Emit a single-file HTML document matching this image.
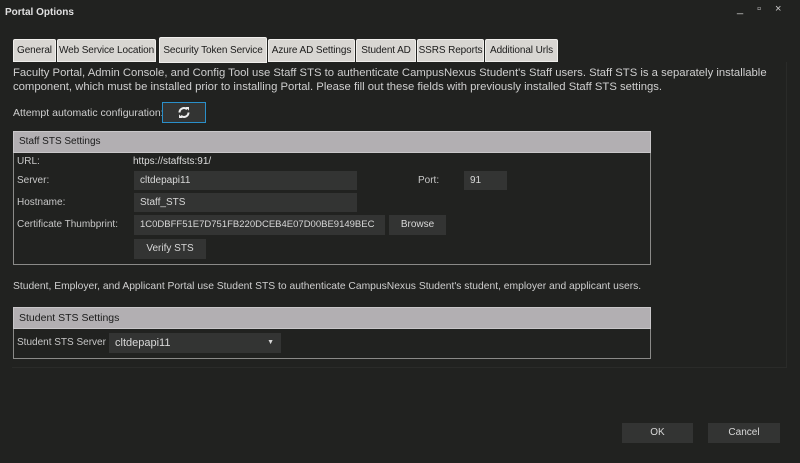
<!DOCTYPE html>
<html><head><meta charset="utf-8"><style>
*{margin:0;padding:0;box-sizing:border-box}
body{width:800px;height:463px;background:#212220;font-family:"Liberation Sans",sans-serif;font-size:10.5px;color:#cfcfcf;position:relative;overflow:hidden}
.a{position:absolute;white-space:nowrap}
.tab{position:absolute;top:39px;height:23px;background:#d8d6d2;border:1px solid #f0efec;color:#1a1a1a;font-size:10px;letter-spacing:-0.1px;line-height:21px;text-align:center;border-radius:2px 2px 0 0;white-space:nowrap;overflow:hidden}
.hdr{position:absolute;background:#b2afb2;color:#1a1a1a;font-size:10.5px;line-height:20px;padding-left:5px;border:1px solid #c9c7c9}
.box{position:absolute;border:1px solid #8a8a88;border-top:none}
.inp{position:absolute;background:#333433;color:#d8d8d8;line-height:19px;padding-left:6px;font-size:10.5px;white-space:nowrap}
.btn{position:absolute;background:#333433;color:#d8d8d8;text-align:center;line-height:20px;font-size:10.5px}
.lbl{position:absolute;color:#c8c8c8;font-size:10px;white-space:nowrap}
</style></head><body>
<div class="a" style="left:5px;top:7px;font-weight:bold;font-size:10px;color:#e0e0e0">Portal Options</div>
<div class="a" style="left:737px;top:3px;color:#ccc;font-size:11px;letter-spacing:14px">_▫×</div>
<div class="a" style="left:12px;top:62px;width:775px;height:306px;border-right:1px solid #2a2b29;border-bottom:1px solid #2a2b29"></div>

<div class="tab" style="left:13px;width:43px">General</div>
<div class="tab" style="left:57px;width:99px">Web Service Location</div>
<div class="tab" style="left:159px;width:108px;top:37px;height:26px;line-height:25px">Security Token Service</div>
<div class="tab" style="left:268px;width:87px">Azure AD Settings</div>
<div class="tab" style="left:356px;width:60px">Student AD</div>
<div class="tab" style="left:417px;width:67px">SSRS Reports</div>
<div class="tab" style="left:485px;width:73px">Additional Urls</div>

<div class="a" style="left:13px;top:66px;font-size:11.3px;line-height:14px">Faculty Portal, Admin Console, and Config Tool use Staff STS to authenticate CampusNexus Student's Staff users. Staff STS is a separately installable<br>component, which must be installed prior to installing Portal. Please fill out these fields with previously installed Staff STS settings.</div>
<div class="a" style="left:13px;top:107px;font-size:10.5px">Attempt automatic configuration:</div>
<div class="a" style="left:162px;top:102px;width:44px;height:21px;background:#333433;border:1px solid #2a8fc9">
<svg width="42" height="19" viewBox="0 0 42 19"><g fill="none" stroke="#eee" stroke-width="2"><path d="M16.5 9.5a4.5 4.5 0 0 1 7.5-3.3"/><path d="M25.5 9.5a4.5 4.5 0 0 1-7.5 3.3"/></g><path d="M22.5 4l3.5 0 0 3.6z M19.5 15l-3.5 0 0-3.6z" fill="#eee"/></svg></div>

<div class="hdr" style="left:13px;top:131px;width:638px;height:22px;font-size:10px">Staff STS Settings</div>
<div class="box" style="left:13px;top:153px;width:638px;height:112px"></div>
<div class="lbl" style="left:17px;top:156px">URL:</div>
<div class="lbl" style="left:133px;top:156px;color:#ddd">https://staffsts:91/</div>
<div class="lbl" style="left:17px;top:175px">Server:</div>
<div class="inp" style="left:134px;top:171px;width:223px;height:19px;font-size:10px">cltdepapi11</div>
<div class="lbl" style="left:418px;top:175px">Port:</div>
<div class="inp" style="left:464px;top:171px;width:43px;height:19px;font-size:10px">91</div>
<div class="lbl" style="left:17px;top:197px">Hostname:</div>
<div class="inp" style="left:134px;top:193px;width:223px;height:19px;font-size:10px">Staff_STS</div>
<div class="lbl" style="left:17px;top:219px">Certificate Thumbprint:</div>
<div class="inp" style="left:134px;top:215px;width:251px;height:20px;font-size:9.5px;line-height:20px">1C0DBFF51E7D751FB220DCEB4E07D00BE9149BEC</div>
<div class="btn" style="left:389px;top:215px;width:57px;height:20px;font-size:10px">Browse</div>
<div class="btn" style="left:134px;top:239px;width:72px;height:20px;font-size:10px">Verify STS</div>

<div class="a" style="left:13px;top:281px;font-size:10.3px">Student, Employer, and Applicant Portal use Student STS to authenticate CampusNexus Student's student, employer and applicant users.</div>
<div class="hdr" style="left:13px;top:307px;width:638px;height:22px">Student STS Settings</div>
<div class="box" style="left:13px;top:329px;width:638px;height:30px"></div>
<div class="lbl" style="left:17px;top:337px;font-size:10px">Student STS Server</div>
<div class="inp" style="left:109px;top:333px;width:172px;height:20px;line-height:20px;font-size:11px">cltdepapi11<span style="position:absolute;right:7px;top:0;font-size:7px">▼</span></div>

<div class="btn" style="left:622px;top:423px;width:71px;height:20px;font-size:10px">OK</div>
<div class="btn" style="left:708px;top:423px;width:72px;height:20px;font-size:10px">Cancel</div>
</body></html>
